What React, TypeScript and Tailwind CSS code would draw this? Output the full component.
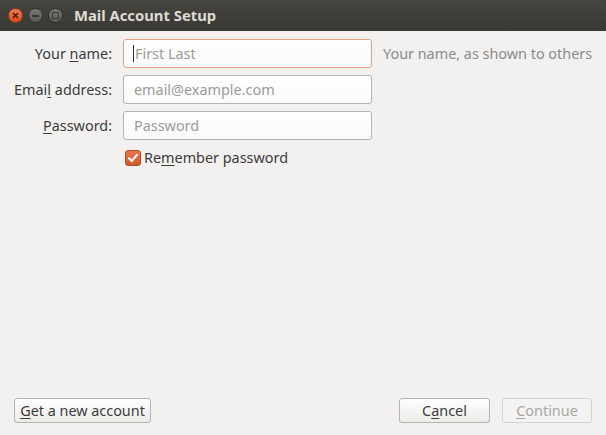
export default function App() {
  const font = { fontFamily: '"Noto Sans", "Open Sans", sans-serif' };
  return (
    <div className="flex h-[435px] w-[606px] flex-col bg-[#f2f1f0] text-[14.4px] text-[#3c3c3c]" style={font}>
      {/* title bar */}
      <div className="flex h-[31px] items-center bg-gradient-to-b from-[#45443f] to-[#3a3935] pl-[8px]">
        <div className="flex items-center gap-[5px]">
          <span className="flex h-[15px] w-[15px] items-center justify-center rounded-full bg-gradient-to-b from-[#f47a4f] to-[#df4a17] border border-[#8a3a1c]">
            <svg width="7" height="7" viewBox="0 0 7 7">
              <path d="M1 1L6 6M6 1L1 6" stroke="#3a1a0c" strokeWidth="1.4" />
            </svg>
          </span>
          <span className="flex h-[15px] w-[15px] items-center justify-center rounded-full bg-gradient-to-b from-[#7a7873] to-[#5a5954] border border-[#2e2d2a]">
            <span className="h-[2px] w-[7px] bg-[#3a3935]" />
          </span>
          <span className="flex h-[15px] w-[15px] items-center justify-center rounded-full bg-gradient-to-b from-[#7a7873] to-[#5a5954] border border-[#2e2d2a]">
            <span className="h-[7px] w-[7px] border-[1.5px] border-[#3a3935]" />
          </span>
        </div>
        <span className="ml-[11px] text-[14.8px] font-bold text-[#dfdbd2]">Mail Account Setup</span>
      </div>

      {/* form */}
      <div className="flex flex-1 flex-col px-[14px] pt-[8px]">
        <div className="grid grid-cols-[98px_249px_auto] items-center gap-x-[11px] gap-y-[7px]">
          <label className="text-right">
            Your <u className="underline-offset-2">n</u>ame:
          </label>
          <div className="flex h-[29px] items-center rounded-[3px] border border-[#e8a088] bg-gradient-to-b from-white to-[#fafafa] px-[9px]">
            <span className="mr-[1px] h-[17px] w-[1px] bg-[#333]" />
            <span className="text-[#9b9b9b]">First Last</span>
          </div>
          <span className="whitespace-nowrap text-[#8b8b8b]">Your name, as shown to others</span>

          <label className="whitespace-nowrap text-right">
            Emai<u className="underline-offset-2">l</u> address:
          </label>
          <div className="flex h-[29px] items-center rounded-[3px] border border-[#b6b3ae] bg-gradient-to-b from-white to-[#fafafa] px-[10px]">
            <span className="text-[#9b9b9b]">email@example.com</span>
          </div>
          <span />

          <label className="text-right">
            <u className="underline-offset-2">P</u>assword:
          </label>
          <div className="flex h-[29px] items-center rounded-[3px] border border-[#b6b3ae] bg-gradient-to-b from-white to-[#fafafa] px-[10px]">
            <span className="text-[#9b9b9b]">Password</span>
          </div>
          <span />

          <span />
          <div className="flex items-center pl-[2px]">
            <span className="flex h-[16px] w-[16px] items-center justify-center rounded-[3px] border border-[#a8512a] bg-gradient-to-b from-[#e8764a] to-[#d35a2c]">
              <svg width="12" height="12" viewBox="0 0 12 12">
                <path d="M2 6.2L4.8 9L10 2.8" fill="none" stroke="white" strokeWidth="2" strokeLinecap="round" strokeLinejoin="round" />
              </svg>
            </span>
            <span className="ml-[3px]">
              Re<u className="underline-offset-2">m</u>ember password
            </span>
          </div>
          <span />
        </div>

        <div className="mt-auto mb-[12px] flex items-center">
          <button className="h-[25px] w-[137px] rounded-[3px] border border-[#b6b3ae] bg-gradient-to-b from-white to-[#ecebe9] text-[#3c3c3c]">
            <u className="underline-offset-2">G</u>et a new account
          </button>
          <button className="ml-auto h-[25px] w-[91px] rounded-[3px] border border-[#b6b3ae] bg-gradient-to-b from-white to-[#ecebe9] text-[#3c3c3c]">
            C<u className="underline-offset-2">a</u>ncel
          </button>
          <button className="ml-[12px] h-[25px] w-[90px] rounded-[3px] border border-[#d6d4d0] bg-[#f4f3f2] text-[#a8a7a4]">
            <u className="underline-offset-2">C</u>ontinue
          </button>
        </div>
      </div>
    </div>
  );
}
